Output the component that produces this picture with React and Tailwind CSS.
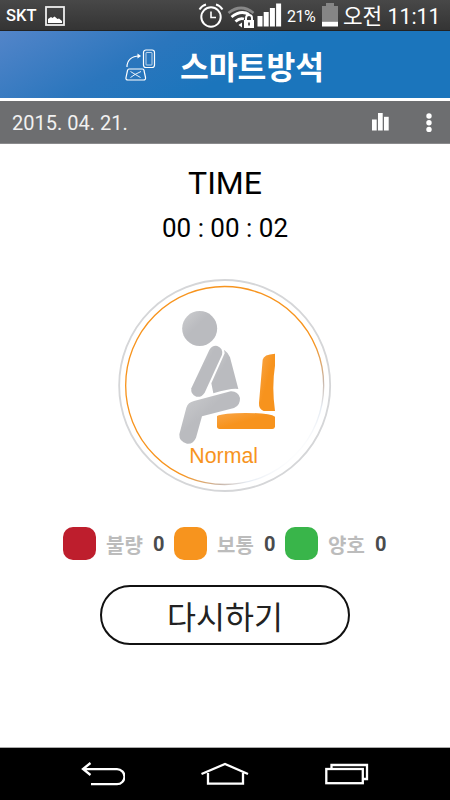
import clsx from "clsx";

const LEVELS = [
  { label: "불량", count: 0, color: "bg-[#be1e2d]" },
  { label: "보통", count: 0, color: "bg-[#f7941e]" },
  { label: "양호", count: 0, color: "bg-[#39b54a]" },
];

export default function App() {
  return (
    <div className="w-[450px] h-[800px] flex flex-col overflow-hidden bg-white font-[Roboto,'Noto_Sans_CJK_KR',sans-serif]">
      <StatusBar />
      <TitleBar />
      <DateBar />
      <main className="flex-1 flex flex-col items-center text-black">
        <h2 className="mt-[19px] h-10 leading-10 text-[32px]">TIME</h2>
        <div className="mt-[7px] h-9 leading-9 text-[26px]">00 : 00 : 02</div>
        <PostureGauge />
        <div className="mt-[34px] w-[324px] h-[33px] flex items-center">
          {LEVELS.map((level) => (
            <Level key={level.label} {...level} />
          ))}
        </div>
        <button className="mt-[25px] w-[250px] h-[60px] rounded-full border-2 border-[#111] flex items-center justify-center pt-[7px] text-[31.5px] leading-none text-[#222]">
          다시하기
        </button>
      </main>
      <NavBar />
    </div>
  );
}

function StatusBar() {
  return (
    <div className="h-[31px] shrink-0 flex items-center pl-[6px] text-white bg-linear-to-b from-[#484848] to-[#343434] border-b border-[#222]">
      <span className="w-[39px] pt-[2px] text-[16.5px] font-medium leading-none">SKT</span>
      <svg className="w-5 h-5 mt-px" viewBox="0 0 20 20">
        <rect x="1" y="1" width="18" height="18" fill="none" stroke="#eee" strokeWidth="1.800" />
        <path d="M3 17v-4l3-2 1.500 1 2-1.500 3 2.500 1.500-.5L17 15v2z" fill="#fff" />
      </svg>
      {/* Alarm */}
      <svg className="ml-[133px] w-[26px] h-[26px] mt-px" viewBox="0 0 26 26" fill="none" stroke="#fff">
        <circle cx="13" cy="14" r="9.7" strokeWidth="2" />
        <path d="M13 8.5V14.5H18" strokeWidth="1.6" />
        <path d="M1.5 6.500Q4 2.500 8 1.500M24.500 6.500Q22 2.500 18 1.500" strokeWidth="2" />
      </svg>
      {/* Secured wifi */}
      <svg className="ml-[3px] w-[29px] h-[26px] mt-px" viewBox="0 0 29 26" fill="none" strokeWidth="2.800">
        <path d="M1.500 10Q14 0 26.500 10" stroke="#888" />
        <path d="M4.500 14Q14 6.500 22 11.500" stroke="#fff" />
        <path d="M8.500 18.500Q13 14.500 17 16" stroke="#fff" />
        <path d="M11.500 22l3.500-2.500v5z" fill="#fff" />
        <rect x="17" y="17" width="10" height="8" fill="#fff" />
        <path d="M19 18v-3a3 3 0 0 1 6 0v3" stroke="#fff" strokeWidth="2" />
        <path d="M22 19.500v3" stroke="#444" strokeWidth="1.8" />
      </svg>
      <svg className="w-[26px] h-6" viewBox="0 0 26 24" fill="#fff">
        <rect x="1.500" y="13" width="5" height="10.500" />
        <rect x="7.700" y="9" width="5" height="14.500" />
        <rect x="13.900" y="5" width="5" height="18.500" />
        <rect x="20.100" y="0.500" width="5" height="23" />
      </svg>
      <span className="ml-[5px] w-[34px] pt-[3px] text-[16px] leading-none whitespace-nowrap tracking-[-0.5px]">21%</span>
      <svg className="ml-px w-4 h-6" viewBox="0 0 16 24">
        <path d="M4 0h8v3h4v15H0V3h4z" fill="#858585" />
        <rect y="18.500" width="16" height="5" fill="#fff" />
      </svg>
      <span className="ml-[5px] text-[21.3px] leading-none whitespace-nowrap pt-[4px]">오전 11:11</span>
    </div>
  );
}

function TitleBar() {
  return (
    <header className="h-[67px] shrink-0 flex items-center bg-[linear-gradient(150deg,#5385c9_0%,#2b76bd_32%,#1b75bc_54%)]">
      <svg className="ml-[124px] w-8 h-8" viewBox="0 0 32 32" fill="none" stroke="#fff" strokeWidth="1.200">
        <rect x="19.500" y="1" width="11" height="17.500" rx="2.500" />
        <rect x="22" y="3.500" width="6" height="12.500" rx="0.500" strokeWidth="0.700" />
        <path d="M3 18C3 11 8 7 15 7" />
        <path d="M13.500 4.500L17 7l-3.500 2.500z" fill="#fff" stroke="none" />
        <path d="M5 20h13.500q1.500 0 1.500 1.500l1.500 7q.500 2.500-2 2.500H4q-2.500 0-2-2.500l1.500-7Q4 20 5 20z" />
        <path d="M6.500 22.500Q12 26 16.500 28.500M17 22.500Q11 25 6.500 28.500" strokeWidth="0.900" />
      </svg>
      <h1 className="ml-[24px] pt-[8px] text-[31.300px] font-bold leading-none text-white whitespace-nowrap">스마트방석</h1>
    </header>
  );
}

function DateBar() {
  return (
    <div className="h-[46px] shrink-0 flex items-center pl-3 bg-[#6d6e70] text-white border-t-3 border-t-white border-b border-b-[#8a8a8c]">
      <span className="w-[360px] pt-[2px] text-[20px] leading-none text-[#f1f1f1]">2015. 04. 21.</span>
      <svg className="w-[17px] h-[18px]" viewBox="0 0 17 18" fill="#fff">
        <rect y="6.500" width="4.700" height="11" />
        <rect x="6" width="4.700" height="17.500" />
        <rect x="12" y="3.800" width="4.700" height="13.700" />
      </svg>
      <svg className="ml-[36px] mt-px w-2 h-5" viewBox="0 0 8 20" fill="#fff">
        <circle cx="4" cy="3" r="2.700" />
        <circle cx="4" cy="9.700" r="2.700" />
        <circle cx="4" cy="16.400" r="2.700" />
      </svg>
    </div>
  );
}

function PostureGauge() {
  return (
    <svg className="mt-[33px] w-[214px] h-[214px] shrink-0" viewBox="24 27 642 642">
      <defs>
        <linearGradient id="ring" x1="0" y1="0" x2="1" y2="1">
          <stop offset="0.620" stopColor="#f7941e" />
          <stop offset="0.740" stopColor="#c9b7aa" />
          <stop offset="0.800" stopColor="#e4eaf2" />
          <stop offset="0.860" stopColor="#ffffff" />
        </linearGradient>
        <linearGradient id="body" x1="0" y1="0" x2="0.600" y2="0.600">
          <stop offset="0" stopColor="#cdced0" />
          <stop offset="0.700" stopColor="#babbbf" />
        </linearGradient>
        <linearGradient id="chair" x1="0" y1="0" x2="0.500" y2="0.500">
          <stop offset="0" stopColor="#f9a648" />
          <stop offset="1" stopColor="#f7931d" />
        </linearGradient>
      </defs>
      <circle cx="344" cy="346.500" r="316.500" fill="none" stroke="#d5d6d8" strokeWidth="5.500" />
      <circle cx="344" cy="346.500" r="297" fill="none" stroke="url(#ring)" strokeWidth="4" />

      {/* Seated figure */}
      <g fill="url(#body)">
        <circle cx="269" cy="175.500" r="52.500" />
        <path d="M298 240Q307 225 322 228Q340 235 336 254L284 368Q274 383 259 380Q241 374 244 355Z" />
        <path d="M342 239Q355 248 360 262L385 357Q365 353 310 370L304 340L344 250Z" />
        <path d="M252 393L362 364Q384 363 390 384Q391 407 372 414L276 439L258 503Q250 523 231 521Q207 516 208 493L229 413Q234 397 252 393Z" />
      </g>

      {/* Chair */}
      <g fill="url(#chair)">
        <path d="M495 251V287Q485 350 495 423H461Q446 418 447 399L458 269Q461 253 495 251Z" />
        <path d="M321 438Q340 429 407 429Q481 429 495 440V470Q494 477 487 477H329Q321 477 321 469Z" />
      </g>
      <text x="238" y="578" fontSize="64" fill="#f7941e" className="font-['Liberation_Sans',sans-serif]">
        Normal
      </text>
    </svg>
  );
}

function Level({ label, count, color }) {
  return (
    <div className="w-[111px] shrink-0 flex items-center">
      <span className={clsx("w-[33px] h-[33px] rounded-[10px]", color)} />
      <span className="ml-[10px] w-[47px] pt-[5px] text-[20px] font-bold leading-none text-[#bcbcbc] whitespace-nowrap">{label}</span>
      <span className="pt-px text-[20px] font-bold leading-none text-[#4a4b4d]">{count}</span>
    </div>
  );
}

function NavBar() {
  return (
    <nav className="h-[53px] shrink-0 flex items-center bg-black border-t border-[#aaa]">
      <svg className="ml-[79px] w-[46px] h-7" viewBox="0 0 46 28" fill="none" stroke="#fff" strokeWidth="2.300">
        <path d="M11.500 3L4 9l7.500 6M4 9.200h34a7.300 7.300 0 0 1 0 15H12" />
      </svg>
      <svg className="ml-[75px] w-[50px] h-7" viewBox="0 0 50 28" fill="none" stroke="#fff" strokeWidth="2.300">
        <path d="M1.500 14L25 4l23 10M8 13v10.700h35V13" />
      </svg>
      <svg className="ml-[74px] w-[46px] h-7" viewBox="0 0 46 28" fill="none" stroke="#fff" strokeWidth="2.300">
        <rect x="2.300" y="9" width="36.500" height="14.200" />
        <path d="M7.500 8.500V5h35.500v14h-4" />
      </svg>
    </nav>
  );
}
